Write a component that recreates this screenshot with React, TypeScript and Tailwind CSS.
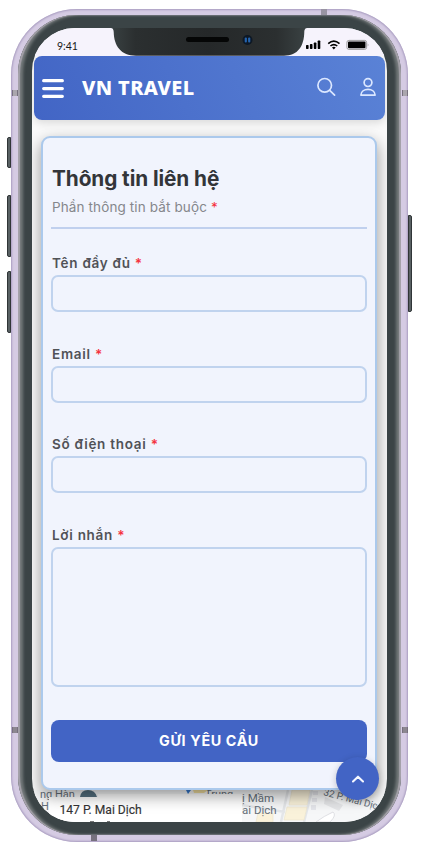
import React from "react";

function Notch() {
  return (
    <svg className="absolute left-[78px] top-0 h-7 w-[230px]" viewBox="110 28 230 28" fill="none">
      <defs>
        <linearGradient id="notch" x1="110" x2="306" y1="0" y2="0" gradientUnits="userSpaceOnUse">
          <stop offset="0" stopColor="#3a4243" />
          <stop offset=".13" stopColor="#2b2f30" />
          <stop offset=".5" stopColor="#252829" />
          <stop offset=".85" stopColor="#2b2f30" />
          <stop offset="1" stopColor="#3a4243" />
        </linearGradient>
      </defs>
      <path d="M110 28C113 28 113.500 29.500 113.700 32C114 46 121 55.700 136 55.700H284C298 55.700 304 46 304.300 32C304.500 29.500 305 28 308 28Z" fill="url(#notch)" />
      <rect x="186" y="37" width="43" height="5" rx="2.500" fill="#050606" />
      <circle cx="247.500" cy="40" r="5" fill="#0d1825" />
      <rect x="244.700" y="37.500" width="2.200" height="5" rx="1" fill="#2463ad" />
      <rect x="248.100" y="37.500" width="2.200" height="5" rx="1" fill="#2463ad" />
    </svg>
  );
}

function StatusBar() {
  return (
    <div className="relative flex h-7 justify-between bg-[#f6f3fc]">
      <Notch />
      <span className="pl-[25px] pt-[11px] font-['Lato',sans-serif] text-[10.5px] leading-[14px] text-[#181818]">9:41</span>
      <svg className="relative h-7 w-[84px]" viewBox="303 28 84 28" fill="#000">
        <rect x="306" y="45" width="2.600" height="4" rx=".7" />
        <rect x="309.900" y="44" width="2.600" height="5" rx=".7" />
        <rect x="313.800" y="42.500" width="2.600" height="6.500" rx=".7" />
        <rect x="317.700" y="40.500" width="2.600" height="8.500" rx=".7" />
        <g fill="none" stroke="#000" strokeWidth="1.600">
          <path d="M328.200 43.600Q333.800 38.800 339.500 43.600" />
          <path d="M330.400 46Q333.800 43.200 337.300 46" />
        </g>
        <path d="M332 47.500Q333.800 46.200 335.700 47.500L333.800 49.400Z" />
        <rect x="346.900" y="40.400" width="19.700" height="9" rx="2" fill="none" stroke="#888" strokeWidth=".8" />
        <rect x="348" y="41.600" width="17.500" height="6.700" rx="1" />
        <path d="M367.800 43.300V46.600Q369 45 367.800 43.300Z" fill="#777" />
      </svg>
    </div>
  );
}

function Header() {
  return (
    <header className="mx-[2px] flex h-16 items-center rounded-lg bg-linear-[65deg] from-[#4265c5] to-[#5a82d6] pl-2 shadow-[0_3px_8px_rgba(0,0,0,.13)]">
      <svg className="h-5 w-[22px]" viewBox="0 0 22 20" fill="none" stroke="#fff" strokeWidth="3.300" strokeLinecap="round">
        <path d="M1.700 2.700H20.300M1.700 10.600H20.300M1.700 18.300H20.300" />
      </svg>
      <h1 className="ml-[18px] font-['Noto_Sans',sans-serif] text-[20px] font-extrabold leading-6 tracking-[.35px] text-white">VN TRAVEL</h1>
      <svg className="ml-auto mr-[6px] h-6 w-[66px]" viewBox="313 76 66 24" fill="none" stroke="#dbe7ff" strokeWidth="1.700" strokeLinecap="round">
        <circle cx="324.700" cy="85.300" r="6.800" />
        <path d="M329.700 90.300L334.600 95.200" />
        <circle cx="368" cy="82.600" r="3.900" />
        <path d="M360.900 95.100C360.900 87.500 375.100 87.500 375.100 95.100Z" strokeLinejoin="round" />
      </svg>
    </header>
  );
}

function Star() {
  return <span className="text-[#f5303b]">*</span>;
}

function Field({ label, multiline = false }: { label: string; multiline?: boolean }) {
  return (
    <label className="block">
      <span className="block h-5 pl-px text-[13.5px] font-semibold leading-[17px] tracking-[.72px] text-[#505257]">
        {label} <Star />
      </span>
      {multiline ? (
        <textarea className="block h-[140px] w-full resize-none rounded-[7px] border-2 border-[#c0d3ee] bg-transparent" />
      ) : (
        <input className="block h-[37px] w-full rounded-[7px] border-2 border-[#c0d3ee] bg-transparent" />
      )}
    </label>
  );
}

function ContactCard() {
  return (
    <section className="relative z-10 ml-[9px] mr-[10px] mt-4 h-[654px] rounded-[9px] border-2 border-[#abc9ec] bg-[#f1f4fd] px-2 shadow-[0_6px_16px_rgba(0,0,0,.4)]">
      <h2 className="pl-px pt-[28px] text-[20.8px] font-bold leading-[26px] tracking-[-.08px] text-[#333539]">Thông tin liên hệ</h2>
      <p className="h-[37px] border-b-2 border-[#c0d0ee] pl-px pt-[5px] text-[13.5px] leading-5 tracking-[.12px] text-[#85878c]">
        Phần thông tin bắt buộc <Star />
      </p>
      <div className="mt-[26px] flex flex-col gap-[33.7px]">
        <Field label="Tên đầy đủ" />
        <Field label="Email" />
        <Field label="Số điện thoại" />
        <Field label="Lời nhắn" multiline />
      </div>
      <button className="mt-[33px] h-[42px] w-full rounded-lg bg-[#4264c5] text-[14.3px] font-bold tracking-[.65px] text-white">GỬI YÊU CẦU</button>
    </section>
  );
}

function MapStrip() {
  return (
    <svg className="block h-8 w-full" viewBox="32 790 355 32" fontFamily="Roboto, sans-serif" fill="#65707a">
      <rect x="32" y="790" width="355" height="32" fill="#f6f7f8" />
      <path d="M281 822L288 790M304 822L312 790M242 805L285 812M350 790L387 814" stroke="#e4e6e9" strokeWidth="2.500" />
      <path d="M292 790H310L307 805H289ZM287 807H307L304 820H284ZM258 813H273V822H256Z" fill="#faf2da" stroke="#ece5cf" strokeWidth=".7" />
      <path d="M313 791H318V795H313ZM312 798H317V802H312ZM311 805H316V810H311Z" fill="#e5e6eb" />
      <path d="M325 797L343 805L339 811L324 804Z" fill="#e5e6e8" />
      <path d="M316 822Q324 816 333 812Q337 815 330 822Z" fill="#fff" stroke="#dedfe3" />
      <text x="40" y="798" fontSize="11">ng Hàn</text>
      <path d="M80 797Q81 790 88 790Q95 790 97 797Z" fill="#557180" />
      <text x="41" y="810" fontSize="11">H</text>
      <text x="205" y="798" fontSize="11">Trung</text>
      <path d="M186 790H191L188 794Z" fill="#3679ce" />
      <path d="M193 790H208L204 793H194Z" fill="#f2dfa0" />
      <path d="M49 797H242V822H49Z" fill="#fff" />
      <path d="M98 794H242V798H98Z" fill="#fff" />
      <text x="242" y="802" fontSize="11.500">ị Mầm</text>
      <text x="242" y="814" fontSize="11.500">ai Dịch</text>
      <text x="323" y="795" fontSize="9.800" transform="rotate(15 323 795)">32 P. Mai Dịc</text>
      <text x="59.500" y="814" fontSize="12.100" fill="#333" stroke="#333" strokeWidth=".15">147 P. Mai Dịch</text>
      <path d="M90 821.500H94M107 821.500H110" stroke="#777" />
    </svg>
  );
}

function Screen() {
  return (
    <main className="relative h-[794px] w-[355px] overflow-hidden rounded-[43px] bg-[#fafafa]">
      <StatusBar />
      <Header />
      <ContactCard />
      <MapStrip />
      <button className="absolute bottom-[22px] right-2 z-20 flex size-[43px] items-center justify-center rounded-full bg-[#4264c5] shadow-[0_2px_7px_rgba(0,0,0,.22)]">
        <svg className="h-2 w-[14px]" viewBox="0 0 14 8" fill="none" stroke="#f4f7ff" strokeWidth="2.100" strokeLinecap="round" strokeLinejoin="round">
          <path d="M2 6.500L7 1.700L12 6.500" />
        </svg>
      </button>
    </main>
  );
}

function SideMarks() {
  return (
    <div className="flex w-[7px] flex-col items-center justify-between pb-[109px] pt-[81px]">
      <i className="size-[6px] border-x border-[#77717f] bg-[#aaa6ad]" />
      <i className="size-[6px] border-x border-[#77717f] bg-[#8c8790]" />
    </div>
  );
}

export default function App() {
  return (
    <div className="flex h-[846px] w-[421px] overflow-hidden bg-white pl-[7px] pt-[9px] font-['Inter',sans-serif]">
      <div className="flex w-1 flex-col pt-32">
        <i className="h-[31px] rounded-l-[2px] border border-[#303537] bg-[#596163]" />
        <i className="mt-[27px] h-[62px] rounded-l-[2px] border border-[#303537] bg-[#596163]" />
        <i className="mt-[14px] h-[62px] rounded-l-[2px] border border-[#303537] bg-[#596163]" />
      </div>
      <div className="flex h-[833px] w-[397px] rounded-[66px] bg-[#d5cbe3] shadow-[inset_0_0_2px_1px_#a99dc0]">
        <SideMarks />
        <div className="flex w-[383px] flex-col">
          <i className="ml-[303px] h-[6px] w-[6px] bg-[#9994a3]" />
          <div className="h-[820px] rounded-[59px] bg-[#3b4446] px-[14px] pt-[13px] shadow-[inset_2px_0_1px_#a5a2aa,inset_-2px_0_1px_#a5a2aa,inset_5px_0_3px_#727879,inset_-5px_0_3px_#727879]">
            <Screen />
          </div>
          <i className="ml-[73px] h-[6px] w-[6px] bg-[#77717f]" />
        </div>
        <SideMarks />
      </div>
      <div className="w-1 pt-[206px]">
        <i className="block h-[97px] rounded-r-[2px] border border-[#303537] bg-[#596163]" />
      </div>
    </div>
  );
}
